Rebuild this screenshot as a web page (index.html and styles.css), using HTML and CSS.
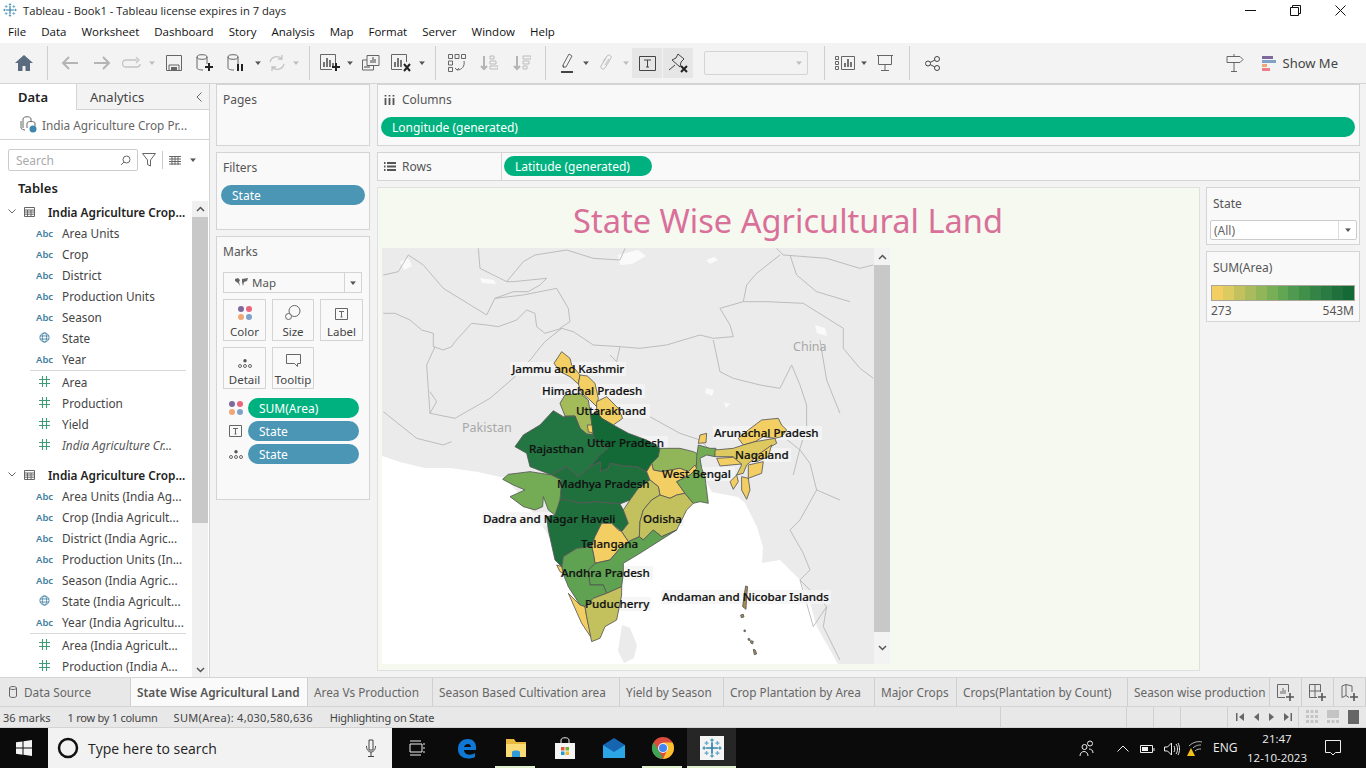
FILE: index.html
```html
<!DOCTYPE html>
<html lang="en">
<head>
<meta charset="utf-8">
<title>Tableau - Book1</title>
<link rel="stylesheet" href="styles.css">
</head>
<body>
<svg class="defs" aria-hidden="true">
  <symbol id="abc" viewBox="0 0 17 10"><text x="0" y="9" class="abc-t">Abc</text></symbol>
  <symbol id="globe" viewBox="0 0 12 12"><g class="ln-b"><circle cx="6" cy="6" r="5"/><ellipse cx="6" cy="6" rx="2.3" ry="5"/><path d="M1 4.3h10M1 7.7h10"/></g></symbol>
  <symbol id="hash" viewBox="0 0 11 11"><path class="ln-g" d="M3.5 0v11M7.5 0v11M0 3.5h11M0 7.5h11"/></symbol>
  <symbol id="table" viewBox="0 0 11 10"><path class="ln-d" d="M.5.5h10v9H.5zM.5 3h10M.5 5h10M.5 7.2h10M3.5 3v6.5M7 3v6.5"/></symbol>
  <symbol id="caret" viewBox="0 0 8 5"><path class="fill-g" d="M0 0h8L4 5z"/></symbol>
  <symbol id="caretd" viewBox="0 0 8 5"><path class="fill-d" d="M0 0h8L4 5z"/></symbol>
  <symbol id="dots4" viewBox="0 0 14 14"><circle class="c1" cx="3" cy="3" r="3"/><circle class="c2" cx="11" cy="3" r="3"/><circle class="c3" cx="3" cy="11" r="3"/><circle class="c4" cx="11" cy="11" r="3"/></symbol>
  <symbol id="tbox" viewBox="0 0 13 12"><path class="ln-d" d="M.5.5h12v11H.5z"/><path class="ln-d" d="M4 3.5h5M6.5 3.5v5.5M5.5 9h2"/></symbol>
  <symbol id="detail" viewBox="0 0 14 9"><circle class="fill-d" cx="7" cy="1.7" r="1.7"/><g class="ln-d"><circle cx="2" cy="7" r="1.5"/><circle cx="7" cy="7" r="1.5"/><circle cx="12" cy="7" r="1.5"/></g></symbol>
  <symbol id="tlogomark" viewBox="0 0 24 24">
    <path class="lg-c" d="M12 5v14M5 12h14"/>
    <path class="lg-m" d="M12 .5v4M10 2.500h4M12 19.500v4M10 21.500h4M.5 12h4M2.500 10v4M19.500 12h4M21.500 10v4"/>
    <path class="lg-s" d="M5.500 3.500v5M3 6h5M18.500 3.500v5M16 6h5M5.500 15.500v5M3 18h5M18.500 15.500v5M16 18h5"/>
  </symbol>
</svg>

<header class="titlebar">
  <svg class="tb-logo" width="14" height="14"><use href="#tlogomark"/></svg>
  <span class="title-text">Tableau - Book1 - Tableau license expires in 7 days</span>
  <div class="winctl">
    <svg viewBox="0 0 11 11"><path class="ln-k" d="M0 5.5h11"/></svg>
    <svg viewBox="0 0 11 11"><path class="ln-k" d="M.5 2.5h8v8h-8zM2.5 2.5v-2h8v8h-2"/></svg>
    <svg viewBox="0 0 11 11"><path class="ln-k" d="M.5.5l10 10M10.5.5l-10 10"/></svg>
  </div>
</header>
<nav class="menubar">
  <span>File</span><span>Data</span><span>Worksheet</span><span>Dashboard</span><span>Story</span><span>Analysis</span><span>Map</span><span>Format</span><span>Server</span><span>Window</span><span>Help</span>
</nav>
<div class="toolbar">
  <div class="t w32"><svg width="18" height="16" viewBox="0 0 18 16"><path class="fill-home" d="M9 0L0 8h3v8h4.500v-5h3v5H15V8h3z"/></svg></div>
  <i class="sep"></i>
  <div class="t w32"><svg width="18" height="14" viewBox="0 0 18 14"><path class="ln-o" d="M17 7H2M8 1L2 7l6 6"/></svg></div>
  <div class="t w32"><svg width="18" height="14" viewBox="0 0 18 14"><path class="ln-o" d="M1 7h15M10 1l6 6-6 6"/></svg></div>
  <div class="t w28"><svg width="20" height="12" viewBox="0 0 20 12"><path class="ln-o2" d="M15 3H4a3 3 0 0 0 0 7h11a3 3 0 0 0 3-3M14 0l3 3-3 3"/></svg></div>
  <div class="t w12"><svg class="car" viewBox="0 0 8 5"><use href="#caret"/></svg></div>
  <div class="t w32"><svg width="16" height="16" viewBox="0 0 16 16"><path class="ln-m" d="M.5.5h15v15H.5zM3 15.500V10h10v5.500"/><path class="fill-m" d="M5 12h6v3.500H5z"/></svg></div>
  <div class="t w30"><svg width="20" height="18" viewBox="0 0 20 18"><g class="ln-m"><ellipse cx="7" cy="3" rx="5" ry="2.300"/><path d="M2 3v11c0 1 2 2 6 2M12 3v7"/></g><path class="ln-bk" d="M14 9v8M10 13h8"/></svg></div>
  <div class="t w32"><svg width="20" height="18" viewBox="0 0 20 18"><g class="ln-m"><ellipse cx="7" cy="3" rx="5" ry="2.300"/><path d="M2 3v11c0 1 2 2 6 2M12 3v7"/></g><path class="ln-bk" d="M12 10v7M16 10v7"/></svg></div>
  <div class="t w12"><svg class="car" viewBox="0 0 8 5"><use href="#caretd"/></svg></div>
  <div class="t w26"><svg width="18" height="16" viewBox="0 0 18 16"><path class="ln-o2" d="M2 7a7 7 0 0 1 12-3M16 9a7 7 0 0 1-12 3M14 0v4h-4M4 16v-4h4"/></svg></div>
  <div class="t w12"><svg class="car" viewBox="0 0 8 5"><use href="#caret"/></svg></div>
  <i class="sep"></i>
  <div class="t w28"><svg width="21" height="18" viewBox="0 0 21 18"><path class="ln-m" d="M12 15.500H.5V.5h15V9"/><path class="ln-dk" d="M4 13V8M7 13V4M10 13V6M13 13V9"/><path class="ln-bk" d="M16 9v8M12 13h8"/></svg></div>
  <div class="t w12"><svg class="car" viewBox="0 0 8 5"><use href="#caretd"/></svg></div>
  <div class="t w30"><svg width="18" height="16" viewBox="0 0 18 16"><path class="ln-m" d="M5 .5h12v10H5zM5 5H.5v10h11v-4.500"/><path class="ln-dk1" d="M9 8V5M11 8V2M13 8V4M3 13v-2M5 13v-2M7 13v-2"/></svg></div>
  <div class="t w30"><svg width="21" height="18" viewBox="0 0 21 18"><path class="ln-m" d="M11 15.500H.5V.5h15V8"/><path class="ln-dk" d="M4 13V8M7 13V4M10 13V6"/><path class="ln-bk" d="M13 10l6 7M19 10l-6 7"/></svg></div>
  <div class="t w12"><svg class="car" viewBox="0 0 8 5"><use href="#caretd"/></svg></div>
  <i class="sep"></i>
  <div class="t w30"><svg width="19" height="18" viewBox="0 0 19 18"><path class="ln-m" d="M.5.500h4v4h-4zM7 .5h4v4H7zM13.500.5h4v4h-4zM.5 7h4v4h-4zM.5 13.500h4v4h-4z"/><path class="ln-m" d="M16 7c1 5-2 9-7 9M7 14l2 2 2-2"/></svg></div>
  <div class="t w34"><svg width="18" height="16" viewBox="0 0 18 16"><path class="ln-o" d="M4 1v13M1 11l3 3 3-3"/><path class="ln-o1" d="M10 1h4v3h-4zM10 6h6v3h-6zM10 11h8v3h-8z"/></svg></div>
  <div class="t w32"><svg width="18" height="16" viewBox="0 0 18 16"><path class="ln-o" d="M4 1v13M1 11l3 3 3-3"/><path class="ln-o1" d="M10 1h8v3h-8zM10 6h6v3h-6zM10 11h4v3h-4z"/></svg></div>
  <i class="sep"></i>
  <div class="t w30"><svg width="14" height="20" viewBox="0 0 14 20"><path class="ln-m" d="M3 12L9 1l3 2-6 11H3zM3 12l1 3"/><path class="bar-u" d="M1 18h12v2H1z"/></svg></div>
  <div class="t w8"><svg class="car" viewBox="0 0 8 5"><use href="#caretd"/></svg></div>
  <div class="t w30"><svg width="13" height="18" viewBox="0 0 13 18"><path class="ln-o1" d="M4 8l4-6c2-2 5 0 4 2L6 14c-1 2-5 1-4-2l5-8M6 11l4-6"/></svg></div>
  <div class="t w12"><svg class="car" viewBox="0 0 8 5"><use href="#caret"/></svg></div>
  <div class="t-btn"><svg width="17" height="15" viewBox="0 0 17 15"><path class="ln-dk1" d="M.5.5h16v14H.5zM5 4h7M8.500 4v7M7 11h3"/></svg></div>
  <div class="t-btn"><svg width="21" height="20" viewBox="0 0 21 20"><path class="ln-dk1" d="M7 12L1 17M4 7l8 7 1-5 3-3-6-5-2 4z"/><path class="ln-bk" d="M13 13l6 6M19 13l-6 6"/></svg></div>
  <div class="fit-sel"><svg class="car" viewBox="0 0 8 5"><use href="#caret"/></svg></div>
  <i class="sep sep-w"></i>
  <div class="t w30"><svg width="20" height="14" viewBox="0 0 20 14"><path class="ln-m" d="M.5.5h3v3h-3zM.5 5.500h3v3h-3zM.5 10.500h3v3h-3zM6.500.5h13v13h-13z"/><path class="ln-dk" d="M10 11V7M13 11V3M16 11V6"/></svg></div>
  <div class="t w8"><svg class="car" viewBox="0 0 8 5"><use href="#caretd"/></svg></div>
  <div class="t w34"><svg width="16" height="16" viewBox="0 0 16 16"><path class="ln-m" d="M0 .5h16M1.500.5v9h13v-9M8 9.500v6M4 15.500h8"/></svg></div>
  <i class="sep"></i>
  <div class="t w32"><svg width="15" height="15" viewBox="0 0 15 15"><g class="ln-dk1"><circle cx="3" cy="7.500" r="2.500"/><circle cx="12" cy="3" r="2.500"/><circle cx="12" cy="12" r="2.500"/><path d="M5.200 6.400L9.800 4.100M5.200 8.600l4.600 2.300"/></g></svg></div>
  <div class="tb-right">
    <svg class="guide" width="18" height="18" viewBox="0 0 18 18"><path class="ln-m" d="M1 2.500h13l3 3-3 3H1zM8 0v2.500M8 8.500V18M5 17.500h6"/></svg>
    <span class="showme"><svg width="14" height="15" viewBox="0 0 14 15"><path class="s1" d="M0 0h11v3H0z"/><path class="s2" d="M0 4h14v3H0z"/><path class="s3" d="M0 8h5v3H0z"/><path class="s4" d="M0 12h8v3H0z"/></svg>Show Me</span>
  </div>
</div>

<main class="workspace">
  <aside class="datapane">
    <div class="tabs">
      <div class="tab on">Data</div>
      <div class="tab">Analytics<svg class="collapse" width="6" height="10" viewBox="0 0 6 10"><path class="ln-m" d="M5.500.5L1 5l4.500 4.500"/></svg></div>
    </div>
    <div class="source">
      <svg width="17" height="17" viewBox="0 0 17 17"><path class="ln-m1" d="M3 3c0-3 8-3 8 0v2M3 3v9M7 7c0-2 8-2 8 0v3M1 5v7c0 1 3 2 4 2M7 7v5"/><circle class="src-ok" cx="13" cy="13" r="3.500"/></svg>
      <span>India Agriculture Crop Pr...</span>
    </div>
    <div class="searchrow">
      <div class="search"><span>Search</span><svg width="11" height="11" viewBox="0 0 11 11"><circle class="ln-m" cx="6.500" cy="4.500" r="3.500"/><path class="ln-m" d="M4 7l-3 3"/></svg></div>
      <svg class="fn" width="14" height="14" viewBox="0 0 14 14"><path class="ln-m" d="M.5.500h13L8.500 7v6l-3-1.500V7z"/></svg>
      <i class="vbar"></i>
      <svg class="gridi" width="12" height="9" viewBox="0 0 12 9"><path class="ln-m" d="M0 .5h12M0 3h12M0 5.500h12M0 8h12M3 0v9M6 0v9M9 0v9"/></svg>
      <svg class="car cg" viewBox="0 0 8 5"><use href="#caretd"/></svg>
    </div>
    <div class="tables">Tables</div>
    <div class="tree">
      <div class="scrollcol">
        <b class="arrow-box"><svg width="9" height="6" viewBox="0 0 9 6"><path class="ln-dk2" d="M1 5l3.500-3.500L8 5"/></svg></b>
        <b class="thumb"></b>
        <b class="trk"></b>
        <b class="arrow-box"><svg width="9" height="6" viewBox="0 0 9 6"><path class="ln-dk2" d="M1 1l3.500 3.500L8 1"/></svg></b>
      </div>
      <div class="group"><svg class="chev" width="8" height="5" viewBox="0 0 8 5"><path class="ln-m" d="M.5.500L4 4 7.500.5"/></svg><svg class="ti" width="11" height="10"><use href="#table"/></svg><span>India Agriculture Crop...</span></div>
      <div class="f"><svg class="fi" width="17" height="10"><use href="#abc"/></svg>Area Units</div>
      <div class="f"><svg class="fi" width="17" height="10"><use href="#abc"/></svg>Crop</div>
      <div class="f"><svg class="fi" width="17" height="10"><use href="#abc"/></svg>District</div>
      <div class="f"><svg class="fi" width="17" height="10"><use href="#abc"/></svg>Production Units</div>
      <div class="f"><svg class="fi" width="17" height="10"><use href="#abc"/></svg>Season</div>
      <div class="f"><svg class="fi gl" width="11" height="11"><use href="#globe"/></svg>State</div>
      <div class="f"><svg class="fi" width="17" height="10"><use href="#abc"/></svg>Year</div>
      <hr class="rule">
      <div class="f"><svg class="fi gl" width="11" height="11"><use href="#hash"/></svg>Area</div>
      <div class="f"><svg class="fi gl" width="11" height="11"><use href="#hash"/></svg>Production</div>
      <div class="f"><svg class="fi gl" width="11" height="11"><use href="#hash"/></svg>Yield</div>
      <div class="f it"><svg class="fi gl" width="11" height="11"><use href="#hash"/></svg>India Agriculture Cr...</div>
      <div class="group g2"><svg class="chev" width="8" height="5" viewBox="0 0 8 5"><path class="ln-m" d="M.5.500L4 4 7.500.5"/></svg><svg class="ti" width="11" height="10"><use href="#table"/></svg><span>India Agriculture Crop...</span></div>
      <div class="f"><svg class="fi" width="17" height="10"><use href="#abc"/></svg>Area Units (India Ag...</div>
      <div class="f"><svg class="fi" width="17" height="10"><use href="#abc"/></svg>Crop (India Agricult...</div>
      <div class="f"><svg class="fi" width="17" height="10"><use href="#abc"/></svg>District (India Agric...</div>
      <div class="f"><svg class="fi" width="17" height="10"><use href="#abc"/></svg>Production Units (In...</div>
      <div class="f"><svg class="fi" width="17" height="10"><use href="#abc"/></svg>Season (India Agric...</div>
      <div class="f"><svg class="fi gl" width="11" height="11"><use href="#globe"/></svg>State (India Agricult...</div>
      <div class="f"><svg class="fi" width="17" height="10"><use href="#abc"/></svg>Year (India Agricultu...</div>
      <hr class="rule">
      <div class="f"><svg class="fi gl" width="11" height="11"><use href="#hash"/></svg>Area (India Agricult...</div>
      <div class="f"><svg class="fi gl" width="11" height="11"><use href="#hash"/></svg>Production (India A...</div>
    </div>
  </aside>

  <section class="cards">
    <div class="card c-pages"><h3>Pages</h3></div>
    <div class="card c-filters"><h3>Filters</h3><div class="pill blue wide">State</div></div>
    <div class="card c-marks">
      <h3>Marks</h3>
      <div class="marktype"><svg width="13" height="9" viewBox="0 0 13 9"><path class="fill-m" d="M0 1l3-1 2 2-1 2 1 4-2-3-3-2zM7 1l6-1-1 3-3 1-1 4-1-4z"/></svg><span>Map</span><em><svg class="car" viewBox="0 0 8 5"><use href="#caretd"/></svg></em></div>
      <div class="markgrid">
        <div class="mbtn"><svg width="14" height="14"><use href="#dots4"/></svg><span>Color</span></div>
        <div class="mbtn"><svg width="16" height="15" viewBox="0 0 16 15"><circle class="ln-m" cx="9.500" cy="6" r="5.500"/><circle class="ln-m fill-w" cx="3.500" cy="11.500" r="3"/></svg><span>Size</span></div>
        <div class="mbtn"><svg width="13" height="12"><use href="#tbox"/></svg><span>Label</span></div>
        <div class="mbtn"><svg width="14" height="9"><use href="#detail"/></svg><span>Detail</span></div>
        <div class="mbtn"><svg width="15" height="14" viewBox="0 0 15 14"><path class="ln-m" d="M.5.500h14v9h-3v3l-3-3h-8z"/></svg><span>Tooltip</span></div>
      </div>
      <div class="mrow"><svg width="14" height="14"><use href="#dots4"/></svg><div class="pill green">SUM(Area)</div></div>
      <div class="mrow"><svg width="13" height="12"><use href="#tbox"/></svg><div class="pill blue">State</div></div>
      <div class="mrow"><svg width="14" height="9"><use href="#detail"/></svg><div class="pill blue">State</div></div>
    </div>
  </section>

  <section class="stage">
    <div class="shelf s-cols">
      <div class="shelf-h"><svg width="11" height="10" viewBox="0 0 11 10"><path class="ln-dk3" d="M1.500 3v7M5.500 3v7M9.500 3v7M1.500 0v1.500M5.500 0v1.500M9.500 0v1.500"/></svg><span>Columns</span></div>
      <div class="pill green longp">Longitude (generated)</div>
    </div>
    <div class="shelf s-rows">
      <div class="rows-h"><svg width="12" height="9" viewBox="0 0 12 9"><path class="ln-dk3" d="M0 1h1.500M3 1h9M0 4.500h1.500M3 4.500h9M0 8h1.500M3 8h9"/></svg><span>Rows</span></div>
      <div class="rows-b"><div class="pill green latp">Latitude (generated)</div></div>
    </div>
    <div class="viewrow">
      <div class="dash">
        <h1>State Wise Agricultural Land</h1>
        <div class="mapwrap">
          <svg class="map" width="492" height="416" viewBox="382 248 492 416">
            <rect class="sea" x="382" y="248" width="492" height="416"/>
            <path class="land" d="M382 248H874V664H838L817 627 810 603 800 580 780 560 762 563 763 547 757 527 745 503 738 497 712 492 700 470 660 480 640 510 610 545 590 570 570 575 545 530 520 495 505 478 478 472 450 468 425 468 400 462 382 456Z"/>
            <path class="land" d="M622 625l8 3 7 17-3 13-10 5-6-12z"/>
            <path class="snow" d="M618 255l20-5 8 6-14 8-12 1zM400 262l8-4 4 8-8 4zM480 278l14 2 2 4-14-1zM706 260l8-3 4 3-8 4zM815 325l10 3 2 8-10-3zM706 388l8 2-2 6-7-3zM724 402l6 2-4 4z"/>
            <g transform="translate(380 245) scale(.3333)" class="borders">
              <path d="M10 205L45 205 90 225 125 255 160 265 160 305 190 315 215 305 225 290 275 235 320 240 355 245 410 225 440 195 465 205 470 245 495 265 545 250 580 260 640 300 720 305"/>
              <path d="M150 505L225 520 330 460 405 395 455 340 470 320 495 290 545 250"/>
              <path d="M720 305L780 310 860 300 960 270 1000 280 1060 275 1050 240 1020 190 1090 170 1100 120 1130 85 1200 30"/>
              <path d="M1000 285L1020 380 1060 400 1140 420 1200 430 1235 360 1260 420 1280 480 1280 550 1260 610 1240 690"/>
              <path d="M10 90L55 80 85 30 130 60 190 130 320 210 345 160 400 140 445 140 480 120 500 100 400 110 380 110 330 85 300 70 295 10"/>
              <path d="M380 110L430 50 465 30 560 15 640 40 720 45 735 10"/>
              <path d="M345 160L430 150 530 130 565 190 570 230 540 250"/>
              <path d="M1190 10L1210 30 1340 40 1440 70 1480 60"/>
              <path d="M1090 170L1160 170 1270 175 1390 250 1390 310 1440 370 1480 400"/>
              <path d="M150 505L140 360 165 305M150 505L170 470 150 440"/>
              <path d="M1230 30L1250 90 1310 140 1410 170"/>
              <path d="M10 500L60 540 110 580 190 600 215 590"/>
              <path d="M720 305L710 350 690 330"/>
            </g>
            <g transform="translate(480 340) scale(.3333)" class="borders">
              <path d="M910 290L960 330 990 370 1010 450 960 540 930 570 970 640 990 690 960 720 1040 800 1030 860 1080 960"/>
              <path d="M1020 0L1040 120 1080 220M1010 450L1080 480"/>
              <path d="M1040 800L1000 860 960 720"/>
              <path d="M700 340L660 300 600 280 500 225"/>
            </g>
            <text class="mapc" x="793" y="351">China</text>
            <text class="mapc" x="462" y="432">Pakistan</text>
            <g class="halo">
              <rect x="510" y="362" width="116" height="14"/><rect x="541" y="384" width="104" height="14"/><rect x="575" y="404" width="75" height="14"/><rect x="586" y="436" width="82" height="14"/><rect x="713" y="426" width="109" height="14"/><rect x="734" y="448" width="57" height="14"/><rect x="661" y="467" width="74" height="14"/><rect x="556" y="477" width="97" height="14"/><rect x="482" y="512" width="136" height="14"/><rect x="642" y="512" width="42" height="14"/><rect x="580" y="537" width="60" height="14"/><rect x="560" y="566" width="93" height="14"/><rect x="584" y="597" width="67" height="14"/><rect x="661" y="590" width="170" height="14"/>
            </g>
            <g transform="translate(480 340) scale(.3333)" class="states">
              <path class="y" d="M222 70L245 35 270 55 275 75 300 105 295 132 270 110 240 95Z"/>
              <path class="y" d="M295 132L300 105 322 108 345 130 355 175 350 200 325 175 305 160Z"/>
              <path class="y" d="M350 185L380 170 415 205 428 235 400 255 365 235 350 215Z"/>
              <path class="s-c4" d="M240 190L255 165 300 160 325 180 332 225 340 285 320 282 300 265 285 228 255 228Z"/>
              <path class="y" d="M322 255L338 255 340 280 325 275Z"/>
              <path class="d2" d="M220 212L180 255 130 285 105 320 140 340 150 380 215 405 260 380 295 410 330 380 360 345 385 325 345 300 340 285 320 282 300 265 285 228 250 230Z"/>
              <path class="d0" d="M332 225L350 215 365 235 400 255 445 280 500 300 540 325 535 350 515 370 500 395 470 380 430 378 390 370 385 385 362 395 362 365 330 380 360 345 385 325 345 300 340 285Z"/>
              <path class="d1" d="M240 480L245 420 215 405 260 380 295 410 330 380 362 365 362 395 385 385 390 370 430 378 470 380 500 395 510 420 475 445 450 480 420 492 350 485 300 490 265 480Z"/>
              <path class="d1" d="M235 480L265 480 300 490 350 485 420 492 430 510 445 550 425 575 395 550 365 550 345 590 335 620 290 625 250 650 245 680 225 660 205 570 200 530 225 525Z"/>
              <path class="c6" d="M68 418L85 403 150 395 215 405 245 420 240 480 225 525 205 510 190 470 188 500 165 510 130 500 90 470 135 450 100 435Z"/>
              <path class="c5" d="M540 325L600 325 640 335 660 345 645 385 625 395 600 385 545 395 520 390 515 370 535 350Z"/>
              <path class="y" d="M510 420L500 395 515 370 520 390 545 395 600 385 625 395 645 375 650 385 630 405 590 425 615 460 590 465 570 475 540 465 535 440Z"/>
              <path class="s-c3" d="M510 420L535 440 540 465 515 480 490 510 480 545 478 590 445 605 425 575 445 550 430 510 450 480 475 445Z"/>
              <path class="s-c3" d="M540 465L570 475 590 465 615 460 640 490 620 510 590 570 545 590 520 570 490 600 478 590 480 545 490 510 515 480Z"/>
              <path class="c6" d="M655 315L690 325 708 325 705 350 680 345 660 355 665 385 675 410 685 490 660 485 640 490 615 460 590 425 630 405 650 385 650 350Z"/>
              <path class="y" d="M655 310L660 285 680 280 678 308Z"/>
              <path class="y" d="M395 550L415 570 425 575 445 605 420 625 390 660 345 670 340 640 335 620 345 590 365 550Z"/>
              <path class="c7" d="M445 605L478 590 490 600 520 570 545 590 590 570 480 640 430 670 430 700 425 740 380 760 370 735 330 735 325 690 345 670 390 660 420 625Z"/>
              <path class="c7" d="M250 650L290 625 335 620 340 640 345 670 325 690 330 735 370 735 380 760 340 775 315 800 300 795 265 740 245 690Z"/>
              <path class="y" d="M230 675L245 680 250 700 240 695Z"/>
              <path class="y" d="M265 760L300 795 315 800 320 830 335 895 305 850Z"/>
              <path class="s-c3" d="M315 800L340 775 380 760 425 740 425 765 410 840 375 860 360 895 335 905 320 830Z"/>
              <path class="y" d="M775 295L805 270 845 240 895 235 905 255 920 270 905 290 885 295 850 290 825 305 790 315Z"/>
              <path class="c2" d="M705 330L760 325 790 315 825 305 885 295 890 310 855 330 830 350 800 375 790 400 770 405 785 375 760 350 705 350Z"/>
              <path class="y" d="M710 355L760 352 785 372 720 378Z"/>
              <path class="y" d="M855 330L875 315 865 350 830 365 825 350Z"/>
              <path class="y" d="M805 375L850 365 845 400 805 415Z"/>
              <path class="y" d="M785 410L805 415 810 450 800 478 785 450Z"/>
              <path class="y" d="M750 425L770 405 775 425 760 448Z"/>
              <path class="isl" d="M797 738L803 740 800 770 798 808 788 800 792 770ZM782 825l8-2 2 8-8 2zM792 870l4 0 0 5-4 0zM805 895l5 2-1 5-5-2zM812 902l8 2-2 8-6-3zM820 928l6 2 4 12-7 2z"/>
            </g>
            <g class="lbl">
              <text x="512" y="373">Jammu and Kashmir</text>
              <text x="542" y="395">Himachal Pradesh</text>
              <text x="576" y="415">Uttarakhand</text>
              <text x="587" y="447">Uttar Pradesh</text>
              <text x="529" y="453">Rajasthan</text>
              <text x="714" y="437">Arunachal Pradesh</text>
              <text x="735" y="459">Nagaland</text>
              <text x="662" y="478">West Bengal</text>
              <text x="557" y="488">Madhya Pradesh</text>
              <text x="483" y="523">Dadra and Nagar Haveli</text>
              <text x="643" y="523">Odisha</text>
              <text x="581" y="548">Telangana</text>
              <text x="561" y="577">Andhra Pradesh</text>
              <text x="585" y="608">Puducherry</text>
              <text x="662" y="601">Andaman and Nicobar Islands</text>
            </g>
          </svg>
          <div class="mapscroll">
            <b class="msa"><svg width="9" height="6" viewBox="0 0 9 6"><path class="ln-dk2" d="M1 5l3.500-3.500L8 5"/></svg></b>
            <b class="msthumb"></b>
            <b class="msa msb"><svg width="9" height="6" viewBox="0 0 9 6"><path class="ln-dk2" d="M1 1l3.500 3.500L8 1"/></svg></b>
          </div>
        </div>
      </div>
      <div class="side">
        <div class="scard sc-state">
          <h4>State</h4>
          <div class="dd"><span>(All)</span><em><svg class="car" viewBox="0 0 8 5"><use href="#caretd"/></svg></em></div>
        </div>
        <div class="scard sc-leg">
          <h4>SUM(Area)</h4>
          <div class="ramp"><i class="r1"></i><i class="r2"></i><i class="r3"></i><i class="r4"></i><i class="r5"></i><i class="r6"></i><i class="r7"></i><i class="r8"></i><i class="r9"></i><i class="r10"></i><i class="r11"></i><i class="r12"></i><i class="r13"></i></div>
          <div class="rlabels"><span>273</span><span>543M</span></div>
        </div>
      </div>
    </div>
  </section>
</main>

<div class="sheets">
  <div class="st st-ds"><svg width="8" height="12" viewBox="0 0 8 12"><path class="ln-m" d="M.5 2c0-2 7-2 7 0v8c0 2-7 2-7 0zM.5 2c0 2 7 2 7 0"/></svg>Data Source</div>
  <div class="st st-on">State Wise Agricultural Land</div>
  <div class="st st-a">Area Vs Production</div>
  <div class="st st-b">Season Based Cultivation area</div>
  <div class="st st-c">Yield by Season</div>
  <div class="st st-d">Crop Plantation by Area</div>
  <div class="st st-e">Major Crops</div>
  <div class="st st-f">Crops(Plantation by Count)</div>
  <div class="st st-g">Season wise production</div>
  <div class="st-add"><svg width="17" height="17" viewBox="0 0 17 17"><path class="ln-m" d="M8 13.500H.5V.5h11V8"/><path class="ln-m" d="M4 10V7M6 10V4M8 10V6"/><path class="ln-dk" d="M13 9v8M9 13h8"/></svg></div>
  <div class="st-add"><svg width="17" height="17" viewBox="0 0 17 17"><path class="ln-m" d="M8 13.500H.5V.5h11V8M6 .5v13M.5 7h11"/><path class="ln-dk" d="M13 9v8M9 13h8"/></svg></div>
  <div class="st-add"><svg width="17" height="17" viewBox="0 0 17 17"><path class="ln-m" d="M8 13.500l-3-2-4 2V2l4-1.500 6 1.500V8M5 .5v11"/><path class="ln-dk" d="M13 9v8M9 13h8"/></svg></div>
</div>

<div class="status">
  <span class="s36">36 marks</span><span class="s1r">1 row by 1 column</span><span class="ssum">SUM(Area): 4,030,580,636</span><span class="shl">Highlighting on State</span>
  <i class="d1a"></i><i class="d2a"></i><i class="d3a"></i><i class="d4a"></i>
  <div class="nav">
    <svg width="8" height="8" viewBox="0 0 8 8"><path class="fill-m" d="M0 0h1.500v8H0zM8 0v8L3 4z"/></svg>
    <svg width="8" height="8" viewBox="0 0 8 8"><path class="fill-m" d="M7 0v8L2 4z"/></svg>
    <svg width="8" height="8" viewBox="0 0 8 8"><path class="fill-m" d="M1 0v8l5-4z"/></svg>
    <svg width="8" height="8" viewBox="0 0 8 8"><path class="fill-m" d="M6.500 0H8v8H6.500zM0 0v8l5-4z"/></svg>
  </div>
  <i class="d5a"></i>
  <div class="views">
    <svg width="12" height="14" viewBox="0 0 12 14"><path class="v-l" d="M0 0h3v3H0zM4.500 0h3v3h-3zM9 0h3v3H9zM0 5h3v3H0zM4.500 5h3v3h-3zM9 5h3v3H9zM0 10h3v3H0zM4.500 10h3v3h-3zM9 10h3v3H9z"/></svg>
    <svg width="12" height="14" viewBox="0 0 12 14"><path class="v-l" d="M0 0h12v8H0zM0 10h3v3H0zM4.500 10h3v3h-3zM9 10h3v3H9z"/></svg>
    <svg width="11" height="14" viewBox="0 0 11 14"><path class="v-d" d="M0 0h11v14H0z"/></svg>
  </div>
</div>

<footer class="taskbar">
  <div class="start"><svg width="16" height="16" viewBox="0 0 16 16"><path class="fill-w2" d="M0 2.300L6.500 1.400V7.500H0zM7.500 1.300L16 0v7.500H7.500zM0 8.500h6.500v6.200L0 13.700zM7.500 8.500H16V16L7.500 14.800z"/></svg></div>
  <div class="tsearch">
    <svg width="22" height="22" viewBox="0 0 22 22"><circle class="cortana" cx="11" cy="11" r="9"/></svg>
    <span>Type here to search</span>
    <svg class="mic" width="10" height="18" viewBox="0 0 10 18"><path class="ln-dk1" d="M3 1h4v10H3zM.5 7c0 8 9 8 9 0M5 13v4M2 17.500h6"/></svg>
  </div>
  <div class="ti-k ti-view"><svg width="16" height="16" viewBox="0 0 16 16"><path class="ln-w" d="M1 4h12v8H1zM1 1h11M1 15h11M15 3v2M15 7v2M15 11v2"/></svg></div>
  <div class="ti-k"><svg width="20" height="21" viewBox="0 0 20 21"><path class="edge" d="M1 11C1 4 6 1 11 1c5 0 9 4 8 11H7c0 5 7 6 11 3v4c-6 3-17 2-17-8zM7 9h7c0-4-6-4-7 0z"/></svg></div>
  <div class="ti-k active"><svg width="22" height="20" viewBox="0 0 22 20"><path class="fold1" d="M1 1h8l2 3h10v15H1z"/><path class="fold2" d="M1 6h20v13H1z"/><path class="fold3" d="M7 19v-5c0-2 8-2 8 0v5z"/></svg></div>
  <div class="ti-k"><svg width="20" height="22" viewBox="0 0 20 22"><path class="fill-w2" d="M0 6h20v16H0z"/><path class="ln-w" d="M6 6V3c0-3 8-3 8 0v3"/><path class="msr" d="M6 10h3.500v3.500H6z"/><path class="msg" d="M10.500 10H14v3.500h-3.500z"/><path class="msb2" d="M6 14.500h3.500V18H6z"/><path class="msy" d="M10.500 14.500H14V18h-3.500z"/></svg></div>
  <div class="ti-k"><svg width="22" height="20" viewBox="0 0 22 20"><path class="mail1" d="M0 7L11 0l11 7v13H0z"/><path class="mail2" d="M0 7l11 7 11-7v13H0z"/></svg></div>
  <div class="ti-k active"><svg width="22" height="22" viewBox="0 0 22 22"><circle class="chr-r" cx="11" cy="11" r="11"/><path class="chr-g" d="M11 22A11 11 0 0 1 1.500 5.500L7 14z"/><path class="chr-y" d="M11 22a11 11 0 0 0 9.500-16.500H11l4 8z"/><circle class="fill-w2" cx="11" cy="11" r="5"/><circle class="chr-b" cx="11" cy="11" r="4"/></svg></div>
  <div class="ti-k active tableau-k"><div class="tlogo"><svg width="20" height="20"><use href="#tlogomark"/></svg></div></div>
  <div class="tray">
    <svg class="tr-p" width="16" height="16" viewBox="0 0 16 16"><circle class="ln-w" cx="5.500" cy="7" r="2.500"/><circle class="ln-w" cx="11" cy="3.500" r="2.500"/><path class="ln-w" d="M1 16c0-6 8-6 8 0M10 9c2 0 4 1 4 4"/></svg>
    <svg class="tr-c" width="12" height="7" viewBox="0 0 12 7"><path class="ln-w" d="M.5 6.500L6 1l5.500 5.500"/></svg>
    <svg class="tr-b" width="15" height="10" viewBox="0 0 15 10"><path class="ln-w" d="M.5 1.500h12v7H.5zM14 4v3"/><path class="fill-w2" d="M2 3h6v4H2z"/></svg>
    <svg class="tr-s" width="16" height="14" viewBox="0 0 16 14"><path class="ln-w" d="M.5 5v4h3l4 4V1l-4 4zM10 4c1 2 1 4 0 6M12 2c2 3 2 7 0 10M14 1c2 4 2 8 0 12"/></svg>
    <svg class="tr-w" width="16" height="16" viewBox="0 0 16 16"><path class="ln-wg" d="M6 7c3-3 6-3 8-3M8 10c2-2 4-2 6-2M2 5c4-4 9-5 13-4"/><path class="warn" d="M4 7l4 8H0z"/></svg>
    <span class="eng">ENG</span>
    <div class="clock"><span>21:47</span><span>12-10-2023</span></div>
    <svg class="tr-a" width="16" height="16" viewBox="0 0 16 16"><path class="ln-w" d="M.5.500h15v12h-5l-2.500 2.500L5.500 12.500h-5z"/></svg>
  </div>
</footer>
</body>
</html>
```

FILE: styles.css
```css
* { box-sizing: border-box; }
html, body { margin: 0; padding: 0; }
body { width: 1366px; height: 768px; overflow: hidden; background: #f3f3f3; font-family: "Noto Sans", "Open Sans", sans-serif; font-size: 12px; color: #333; display: flex; flex-direction: column; }
.defs { display: none; }
svg { display: block; flex: none; }
i, b, em { display: block; font-style: normal; font-weight: 400; }

.ln-b, .ln-g, .ln-d, .ln-k, .ln-o, .ln-o1, .ln-o2, .ln-m, .ln-m1, .ln-bk, .ln-dk, .ln-dk1, .ln-dk2, .ln-dk3, .ln-w, .ln-wg { fill: none; }
.ln-b { stroke: #4b87a6; stroke-width: 1; }
.ln-g { stroke: #3f9a78; stroke-width: 1.1; }
.ln-d { stroke: #666; stroke-width: 1; }
.ln-k { stroke: #111; stroke-width: 1; }
.ln-o { stroke: #b4b4b4; stroke-width: 2; }
.ln-o1 { stroke: #bbb; stroke-width: 1; }
.ln-o2 { stroke: #c4c4c4; stroke-width: 1.300; }
.ln-m { stroke: #666; stroke-width: 1; }
.ln-m1 { stroke: #666; stroke-width: 1; }
.ln-bk { stroke: #222; stroke-width: 2; }
.ln-dk { stroke: #555; stroke-width: 1.600; }
.ln-dk1 { stroke: #444; stroke-width: 1; }
.ln-dk2 { stroke: #555; stroke-width: 1.500; }
.ln-dk3 { stroke: #555; stroke-width: 1.800; }
.lg-c, .lg-m, .lg-s { fill: none; }
.lg-c { stroke: #2f7fa8; stroke-width: 2; }
.lg-m { stroke: #3f8fb5; stroke-width: 1.500; }
.lg-s { stroke: #6aa9c9; stroke-width: 1.500; }
.ln-w { stroke: #eee; stroke-width: 1; }
.ln-wg { stroke: #bbb; stroke-width: 1; }
.fill-g { fill: #bdbdbd; }
.fill-d { fill: #555; }
.fill-m { fill: #666; }
.fill-w { fill: #f9f9f9; }
.fill-w2 { fill: #f4f4f4; }
.fill-home { fill: #5a6b7f; }
.abc-t { font: 600 9.500px "Noto Sans", sans-serif; fill: #3f7f9f; }
.c1 { fill: #7d6a9a; } .c2 { fill: #e9657c; } .c3 { fill: #f0a777; } .c4 { fill: #7ea2c8; }
.bar-u { fill: #444; }
.car { width: 6px; height: 4px; }

.titlebar { height: 20px; background: #fff; display: flex; align-items: center; padding-left: 3px; position: relative; color: #222; flex: none; }
.tb-logo { margin-right: 6px; }
.title-text { font-family: "Open Sans", sans-serif; font-size: 11.200px; }
.winctl { margin-left: auto; display: flex; gap: 34px; padding-right: 20px; }
.winctl svg { width: 11px; height: 11px; }
.menubar { height: 23px; background: #fff; display: flex; align-items: center; padding-left: 8px; gap: 15px; color: #111; font-family: "Open Sans", sans-serif; font-size: 11.500px; flex: none; }

.toolbar { height: 41px; background: #f3f3f3; border-bottom: 1px solid #d4d4d4; display: flex; align-items: center; padding-left: 8px; flex: none; }
.t { height: 30px; display: flex; align-items: center; justify-content: center; flex: none; }
.w8 { width: 8px; } .w12 { width: 12px; } .w26 { width: 26px; } .w28 { width: 28px; } .w30 { width: 30px; } .w32 { width: 32px; } .w34 { width: 34px; }
.sep { width: 1px; height: 34px; background: #cfcfcf; margin: 0 6px 0 7px; flex: none; }
.sep-w { margin: 0 5px 0 16px; }
.t-btn { width: 30px; height: 30px; background: #e6e6e6; margin-right: 1px; display: flex; align-items: center; justify-content: center; flex: none; }
.fit-sel { width: 104px; height: 24px; margin-left: 10px; border: 1px solid #d4d4d4; border-radius: 2px; display: flex; align-items: center; justify-content: flex-end; padding-right: 5px; flex: none; }
.tb-right { margin-left: auto; display: flex; align-items: center; padding-right: 28px; }
.guide { margin-right: 18px; }
.showme { display: flex; align-items: center; gap: 7px; font-size: 13px; color: #444; }
.s1 { fill: #7d6a9a; } .s2 { fill: #7ea2c8; } .s3 { fill: #f0a777; } .s4 { fill: #ee7d85; }

.workspace { height: 594px; display: flex; flex: none; background: #f3f3f3; }
.datapane { width: 210px; background: #fff; border-right: 1px solid #d4d4d4; display: flex; flex-direction: column; overflow: hidden; flex: none; }
.tabs { display: flex; height: 26px; flex: none; font-size: 13px; }
.tab { display: flex; align-items: center; background: #f3f3f3; border-bottom: 1px solid #d4d4d4; flex: 1; padding-left: 13px; position: relative; color: #444; }
.tab.on { background: #fff; flex: none; width: 77px; border-bottom: 0; border-right: 1px solid #d4d4d4; padding-left: 18px; font-weight: 600; color: #222; }
.collapse { position: absolute; right: 7px; top: 8px; }
.source { height: 30px; display: flex; align-items: center; padding-left: 20px; gap: 5px; border-bottom: 1px solid #d4d4d4; color: #666; flex: none; font-size: 11.800px; }
.src-ok { fill: #3f86ad; }
.searchrow { height: 33px; padding: 9px 0 2px 8px; display: flex; align-items: center; flex: none; }
.search { width: 130px; height: 22px; border: 1px solid #ccc; border-radius: 2px; display: flex; align-items: center; justify-content: space-between; padding: 0 6px 0 7px; color: #aaa; }
.fn { margin-left: 4px; }
.vbar { width: 1px; height: 18px; background: #ccc; margin: 0 6px; }
.cg { margin-left: 9px; }
.tables { height: 28px; padding-top: 2px; flex: none; padding-left: 18px; font-weight: 600; font-size: 13px; color: #222; display: flex; align-items: center; }
.tree { position: relative; flex: 1; overflow: hidden; font-size: 11.800px; }
.scrollcol { position: absolute; right: 1px; top: 0; bottom: 0; width: 16px; background: #f0f0f0; display: flex; flex-direction: column; }
.arrow-box { height: 16px; display: flex; align-items: center; justify-content: center; flex: none; }
.thumb { height: 306px; background: #c8c8c8; flex: none; }
.trk { flex: 1; }
.group { height: 21px; display: flex; align-items: center; padding-left: 8px; font-weight: 600; color: #222; font-size: 11.800px; }
.group.g2 { margin-top: 9px; }
.chev { margin-right: 8px; }
.ti { margin-right: 13px; }
.f { height: 21px; display: flex; align-items: center; padding-left: 36px; color: #444; white-space: nowrap; }
.fi { width: 17px; margin-right: 9px; }
.gl { width: 11px; margin: 0 12px 0 3px; }
.f.it { font-style: italic; color: #555; }
.rule { margin: 1px 23px 0 30px; width: 156px; height: 1px; border: 0; background: #d9d9d9; }

.cards { width: 154px; margin-left: 6px; display: flex; flex-direction: column; gap: 6px; flex: none; }
.card { border: 1px solid #d4d4d4; background: #f9f9f9; padding: 0 4px 0 6px; }
.card h3 { margin: 0; font-weight: 400; font-size: 12px; color: #555; height: 28px; display: flex; align-items: center; }
.c-pages { height: 62px; }
.c-filters { height: 78px; }
.c-filters h3 { height: 32px; padding-bottom: 3px; }
.c-marks { height: 264px; }
.c-marks h3 { height: 29px; }
.pill { height: 20px; border-radius: 10px; color: #fff; display: flex; align-items: center; padding-left: 11px; white-space: nowrap; }
.blue { background: #4b96b4; }
.green { background: #00b180; }
.wide { width: 144px; margin-left: -2px; }
.marktype { height: 21px; margin: 6px 3px 0 0; width: 139px; border: 1px solid #d4d4d4; background: #f9f9f9; display: flex; align-items: center; padding-left: 11px; gap: 4px; color: #555; position: relative; font-size: 11.500px; }
.marktype em { position: absolute; right: 0; top: 0; bottom: 0; width: 17px; border-left: 1px solid #d4d4d4; display: flex; align-items: center; justify-content: center; }
.markgrid { display: grid; grid-template-columns: 43px 42px 43px; column-gap: 6px; row-gap: 6px; margin-top: 6px; }
.mbtn { height: 42px; border: 1px solid #d4d4d4; display: flex; flex-direction: column; align-items: center; justify-content: flex-end; padding-bottom: 1px; gap: 3px; font-size: 11.500px; color: #444; }
.mbtn svg { margin-bottom: 1px; }
.mrow { height: 20px; margin-top: 3px; display: flex; align-items: center; position: relative; }
.markgrid + .mrow { margin-top: 9px; }
.mrow svg { margin-right: 5px; margin-left: 6px; }
.mrow .pill { position: absolute; left: 25px; width: 111px; }

.stage { width: 983px; margin-left: 7px; display: flex; flex-direction: column; gap: 6px; flex: none; }
.shelf { border: 1px solid #d4d4d4; background: #f9f9f9; }
.s-cols { height: 62px; padding: 0 4px 0 3px; }
.shelf-h { height: 32px; display: flex; align-items: center; padding: 0 0 3px 3px; gap: 7px; color: #555; }
.longp { width: 974px; }
.s-rows { height: 29px; display: flex; }
.rows-h { width: 124px; border-right: 1px solid #d4d4d4; display: flex; align-items: center; padding-left: 6px; gap: 6px; color: #555; }
.rows-b { padding: 3px 2px; }
.latp { width: 148px; }
.viewrow { display: flex; gap: 6px; height: 484px; }
.dash { width: 823px; background: #f6f9ef; border: 1px solid #e0e0e0; padding-left: 4px; flex: none; }
.dash h1 { margin: 0; height: 60px; width: 812px; padding-top: 5px; display: flex; justify-content: center; align-items: center; font-weight: 400; font-size: 32.600px; color: #d9709a; white-space: nowrap; }
.mapwrap { display: flex; }
.mapscroll { width: 16px; height: 416px; background: #f0f0f0; display: flex; flex-direction: column; }
.msa { height: 17px; display: flex; align-items: center; justify-content: center; background: #f3f3f3; flex: none; }
.msthumb { flex: 1; background: #c8c8c8; }
.msb { height: 32px; }
.sea { fill: #fff; }
.land { fill: #ebebeb; }
.snow { fill: #fafafa; }
.borders path { fill: none; stroke: #b5b5b5; stroke-width: 2.600; stroke-linejoin: round; }
.states path { stroke: #555; stroke-width: 2.500; stroke-linejoin: round; }
.states .y { fill: #f3cf63; }
.states .d0 { fill: #136a36; } .states .d1 { fill: #20703e; } .states .d2 { fill: #237642; }
.states .c2 { fill: #ddc95f; } .states .s-c3 { fill: #c3c15e; } .states .s-c4 { fill: #a4bb5a; } .states .c5 { fill: #90b659; } .states .c6 { fill: #74ac56; } .states .c7 { fill: #5fa252; }
.states .isl { fill: #a88c50; }
.mapc { font-size: 12.500px; fill: #a8a8a8; }
.halo rect { fill: #f4f4f4; fill-opacity: .85; }
.lbl text { font-size: 11.600px; font-weight: 500; fill: #111; stroke: #111; stroke-width: .2; }

.side { width: 154px; display: flex; flex-direction: column; gap: 6px; flex: none; }
.scard { border: 1px solid #d4d4d4; background: #f9f9f9; }
.scard h4 { margin: 0; font-weight: 400; color: #555; padding: 0 0 0 6px; display: flex; align-items: center; }
.sc-state { height: 58px; }
.sc-state h4 { height: 30px; }
.dd { height: 20px; margin: 2px 3px 0 3px; width: 147px; background: #fff; border: 1px solid #ccc; display: flex; align-items: center; padding-left: 3px; color: #666; position: relative; border-radius: 2px; }
.dd em { position: absolute; right: 0; top: 0; bottom: 0; width: 18px; border-left: 1px solid #ddd; display: flex; align-items: center; justify-content: center; }
.sc-leg { height: 71px; }
.sc-leg h4 { height: 31px; }
.ramp { display: flex; height: 16px; width: 144px; margin: 2px 0 0 4px; border: 1px solid #aaa69a; }
.ramp i { flex: 1; }
.r1 { background: #f3cf63; } .r2 { background: #dccb60; } .r3 { background: #c3c15e; } .r4 { background: #a9bb5c; } .r5 { background: #90b659; } .r6 { background: #78ae56; } .r7 { background: #62a553; } .r8 { background: #4f9a50; } .r9 { background: #419049; } .r10 { background: #348447; } .r11 { background: #2a7a43; } .r12 { background: #20703e; } .r13 { background: #146a36; }
.rlabels { display: flex; justify-content: space-between; padding: 1px 5px 0 4px; color: #555; }

.sheets { height: 30px; background: #e8e8e8; border-top: 1px solid #d4d4d4; border-bottom: 1px solid #d4d4d4; display: flex; margin-top: -1px; flex: none; position: relative; color: #666; font-size: 11.800px; }
.st { border-right: 1px solid #cfcfcf; display: flex; align-items: center; padding-left: 6px; white-space: nowrap; flex: none; overflow: hidden; }
.st-ds { width: 131px; padding-left: 9px; gap: 7px; }
.st-on { width: 177px; background: #fafafa; color: #555; font-weight: 600; }
.st-a { width: 125px; } .st-b { width: 187px; } .st-c { width: 104px; } .st-d { width: 151px; } .st-e { width: 82px; } .st-f { width: 171px; } .st-g { width: 142px; }
.st-add { width: 32px; border-right: 1px solid #cfcfcf; display: flex; align-items: center; justify-content: center; flex: none; }

.status { height: 21px; background: #e8e8e8; border-bottom: 1px solid #d4d4d4; position: relative; display: flex; align-items: center; color: #444; font-size: 11px; flex: none; }
.s36 { margin-left: 3px; } .s1r { margin-left: 17px; letter-spacing: -.25px; } .ssum { margin-left: 16px; letter-spacing: .3px; } .shl { margin-left: 17px; letter-spacing: -.25px; }
.status > i { width: 1px; height: 20px; background: #d0d0d0; position: absolute; top: 0; }
.d1a { left: 1000px; } .d2a { left: 1126px; } .d3a { left: 1153px; } .d4a { left: 1180px; } .d5a { left: 1298px; }
.nav { position: absolute; left: 1227px; width: 71px; top: 0; height: 20px; border-left: 1px solid #d0d0d0; display: flex; align-items: center; gap: 8px; padding-left: 8px; }
.views { position: absolute; left: 1306px; top: 3px; display: flex; gap: 9px; }
.v-l { fill: #c4c4c4; } .v-d { fill: #666; }

.taskbar { height: 40px; background: #0b0b0b; display: flex; flex: none; position: relative; color: #eee; }
.start { width: 48px; display: flex; align-items: center; justify-content: center; flex: none; }
.tsearch { width: 344px; background: #f2f2f2; display: flex; align-items: center; padding-left: 9px; color: #222; flex: none; position: relative; }
.tsearch span { margin-left: 9px; font-family: "Open Sans", sans-serif; font-size: 14px; }
.cortana { fill: none; stroke: #111; stroke-width: 2.500; }
.mic { position: absolute; left: 318px; top: 11px; }
.ti-k { width: 49px; display: flex; align-items: center; justify-content: center; flex: none; position: relative; }
.ti-view { width: 50px; }
.ti-k.active::after { content: ""; position: absolute; left: 4px; right: 5px; bottom: 0; height: 2px; background: #dfeecb; }
.tableau-k { background: #262626; }
.tableau-k.active::after { left: 0; right: 0; }
.tlogo { width: 24px; height: 24px; background: #f4f4f4; display: flex; align-items: center; justify-content: center; }
.edge { fill: #0f78d4; }
.fold1 { fill: #e8b93e; } .fold2 { fill: #fbdb76; } .fold3 { fill: #2f9bd8; }
.msr { fill: #e8543f; } .msg { fill: #6fb52f; } .msb2 { fill: #1f9bd8; } .msy { fill: #f5b92b; }
.mail1 { fill: #1565b0; } .mail2 { fill: #2ba5e6; }
.chr-r { fill: #dd4b3c; } .chr-g { fill: #3aa757; } .chr-y { fill: #fbc02d; } .chr-b { fill: #4285f4; }
.warn { fill: #f2c11a; }
.tray { position: absolute; left: 0; top: 0; bottom: 0; width: 1366px; pointer-events: none; }
.tray > * { position: absolute; }
.tr-p { left: 1079px; top: 12px; } .tr-c { left: 1117px; top: 17px; } .tr-b { left: 1140px; top: 16px; } .tr-s { left: 1164px; top: 14px; } .tr-w { left: 1187px; top: 13px; }
.eng { left: 1213px; top: 11px; font-size: 12px; font-family: "Open Sans", sans-serif; }
.clock { left: 1245px; width: 64px; top: 3px; display: flex; flex-direction: column; align-items: center; gap: 4px; font-family: "Open Sans", sans-serif; font-size: 11.500px; line-height: 15px; }
.tr-a { left: 1325px; top: 12px; }
```
